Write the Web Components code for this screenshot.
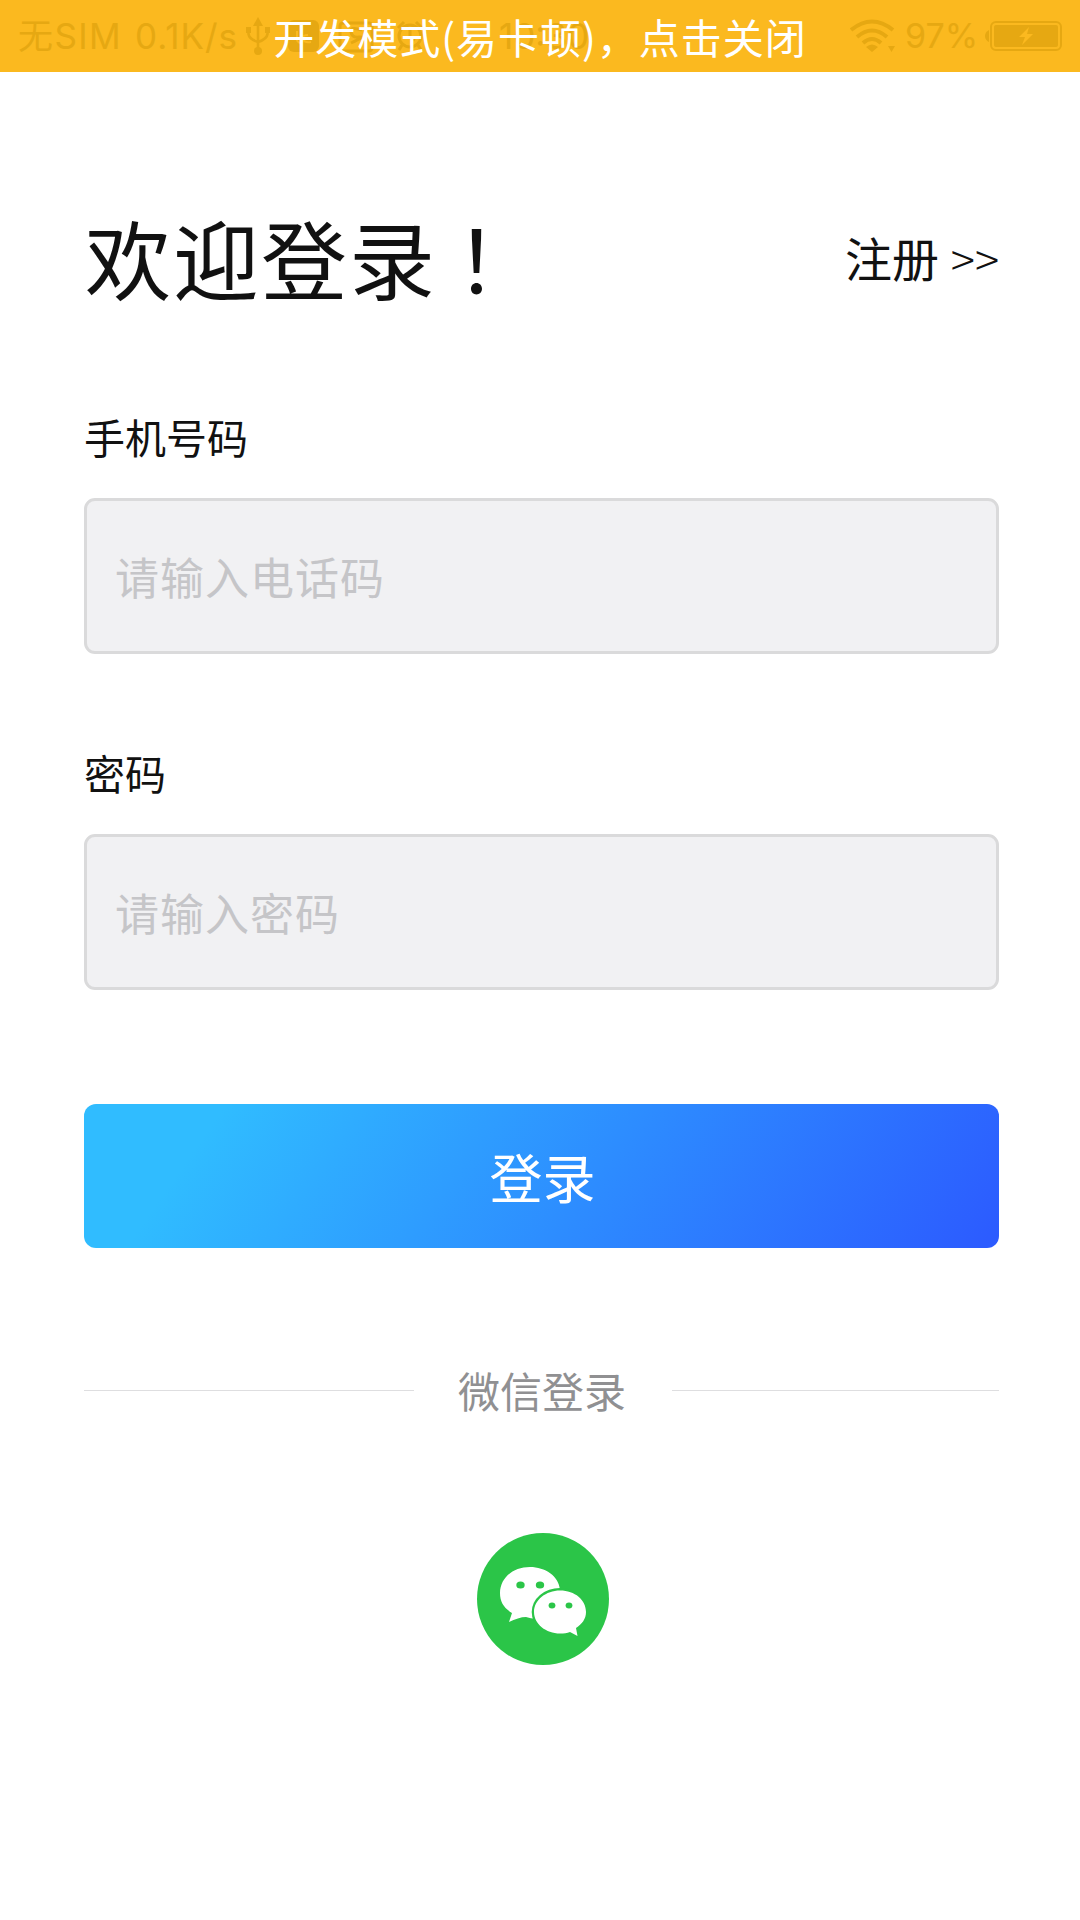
<!DOCTYPE html>
<html lang="zh-CN">
<head>
<meta charset="utf-8">
<title>欢迎登录</title>
<style>
  body {
    margin: 0;
    background: #fff;
    color: #111;
    font-family: "Noto Sans CJK SC", sans-serif;
  }
</style>
</head>
<body>
<login-page></login-page>

<script>
class StatusBar extends HTMLElement {
  constructor() {
    super();
    this.attachShadow({ mode: "open" });
    this.shadowRoot.innerHTML = `
      <style>
        :host {
          display: block;
          position: relative;
          height: 72px;
          background: #fbb91f;
          overflow: hidden;
        }
        .system {
          display: flex;
          align-items: center;
          height: 72px;
          color: #e6a812;
          font-family: Inter, "Noto Sans CJK SC", sans-serif;
          font-size: 35px;
          line-height: 74px;
          white-space: pre;
        }
        .carrier { margin-left: 18px; width: 104px; letter-spacing: 1.4px; }
        .speed { margin-left: 13px; width: 103px; letter-spacing: 1px; }
        .usb { margin-left: 8px; }
        .apps { margin-left: 18px; }
        .time { margin-left: 71px; width: 95px; }
        .wifi { margin-left: 256px; }
        .level { margin-left: 9px; width: 73px; font-size: 34px; }
        .battery { margin-left: 7px; }
        svg { display: block; flex: none; }
        /* developer notice covers the system bar */
        .notice {
          position: absolute;
          inset: 0;
          color: #fff;
          font-size: 41px;
          line-height: 72px;
          text-align: center;
          letter-spacing: 1px;
          white-space: nowrap;
        }
      </style>
      <div class="system">
        <span class="carrier">无SIM</span>
        <span class="speed">0.1K/s</span>
        <svg class="usb" width="24" height="40" viewBox="0 0 24 40" fill="none" stroke="currentColor" stroke-width="2.6">
          <path d="M12 5V35M2.5 14V18Q3 23 12 26Q21 23 21.5 18V13"/>
          <path d="M7 10L12 1L17 10Z" fill="currentColor" stroke="none"/>
          <circle cx="12" cy="35" r="4" fill="currentColor" stroke="none"/>
          <path d="M0 11H5V17H0ZM19 11H24V17H19Z" fill="currentColor" stroke="none"/>
        </svg>
        <svg class="apps" width="140" height="36" viewBox="0 0 140 36">
          <rect x="0" y="2" width="31" height="32" rx="6" fill="currentColor"/>
          <path d="M9 13V22Q10 26 15 24M20 17Q14 17 15 21T23 24" fill="none" stroke="#fbb91f" stroke-width="2"/>
          <rect x="52" y="5" width="32" height="28" rx="3" fill="none" stroke="currentColor" stroke-width="3"/>
          <path d="M74 12Q62 8 63 14T71 19T63 25" fill="none" stroke="currentColor" stroke-width="3"/>
          <circle cx="122" cy="18" r="11" fill="none" stroke="currentColor" stroke-width="3"/>
          <path d="M110 10L116 4M128 4L134 10M122 12V19L127 22M114 27L111 32M130 27L133 32" fill="none" stroke="currentColor" stroke-width="3"/>
        </svg>
        <span class="time">10:30</span>
        <svg class="wifi" width="46" height="36" viewBox="0 0 46 36" fill="none" stroke="currentColor" stroke-width="4">
          <path d="M1 12Q22 -5 43 12M7 19Q22 6 37 19M13 25Q22 17 31 25"/>
          <path d="M16 29Q22 24 28 29L22 34ZM38 28H45L41.5 34Z" fill="currentColor" stroke="none"/>
        </svg>
        <span class="level">97%</span>
        <svg class="battery" width="78" height="32" viewBox="0 0 78 32">
          <path d="M4 10V22Q0 20 0 16T4 10Z" fill="currentColor"/>
          <rect x="6" y="2" width="70" height="28" rx="5" fill="none" stroke="currentColor" stroke-width="2"/>
          <rect x="9" y="5" width="64" height="22" rx="2" fill="currentColor"/>
          <path d="M44 7L34 17H40L37 25L48 14H42Z" fill="#fbb91f"/>
        </svg>
      </div>
      <div class="notice"><slot></slot></div>
    `;
  }
}

class LoginHeader extends HTMLElement {
  constructor() {
    super();
    this.attachShadow({ mode: "open" });
    this.shadowRoot.innerHTML = `
      <style>
        :host {
          display: flex;
          justify-content: space-between;
          height: 130px;
          white-space: nowrap;
        }
        h1 {
          margin: 0;
          font-size: 86px;
          font-weight: 400;
          line-height: 120px;
          letter-spacing: 2px;
        }
        .link {
          font-size: 47px;
          line-height: 119px;
        }
      </style>
      <h1><slot></slot></h1>
      <span class="link"><slot name="link"></slot></span>
    `;
  }
}

class FormField extends HTMLElement {
  constructor() {
    super();
    this.attachShadow({ mode: "open" });
    this.shadowRoot.innerHTML = `
      <style>
        :host {
          display: block;
        }
        .label {
          height: 60px;
          margin-bottom: 29px;
          font-size: 41px;
          line-height: 55px;
        }
        .box {
          box-sizing: border-box;
          height: 156px;
          padding-left: 28px;
          border: 3px solid #dadadb;
          border-radius: 11px;
          background: #f1f1f3;
          color: #c5c5c8;
          font-size: 44px;
          line-height: 151px;
          letter-spacing: 1px;
        }
      </style>
      <div class="label"><slot name="label"></slot></div>
      <div class="box"><slot></slot></div>
    `;
  }
}

class LoginButton extends HTMLElement {
  constructor() {
    super();
    this.attachShadow({ mode: "open" });
    this.shadowRoot.innerHTML = `
      <style>
        :host {
          display: block;
          box-sizing: border-box;
          height: 144px;
          padding-left: 2px;
          border-radius: 12px;
          background: linear-gradient(125deg, #30bcff 14%, #2d8dff 55%, #2c5aff 100%);
          color: #fff;
          font-size: 53px;
          line-height: 144px;
          text-align: center;
        }
      </style>
      <slot></slot>
    `;
  }
}

class TextDivider extends HTMLElement {
  constructor() {
    super();
    this.attachShadow({ mode: "open" });
    this.shadowRoot.innerHTML = `
      <style>
        :host {
          display: flex;
          align-items: center;
          height: 60px;
          color: #909092;
          font-size: 42px;
          line-height: 60px;
        }
        :host::before, :host::after {
          content: "";
          flex: 330;
          height: 1px;
          background: #dedee0;
        }
        :host::after { flex: 327; }
        span {
          padding: 0 46px 0 44px;
        }
      </style>
      <span><slot></slot></span>
    `;
  }
}

class WechatIcon extends HTMLElement {
  constructor() {
    super();
    this.attachShadow({ mode: "open" });
    this.shadowRoot.innerHTML = `
      <style>
        :host {
          display: block;
          width: 132px;
          height: 132px;
        }
        svg { display: block; }
      </style>
      <svg width="132" height="132" viewBox="0 0 132 132">
        <circle cx="66" cy="66" r="66" fill="#2bc548"/>
        <path d="M23 60C23 45 36 34 53 34C68 34 82 43 83 57L70 86C63 86 55 86 49 84C44 84 38 86 32 89L35 80C27 75 23 69 23 60Z" fill="#fff"/>
        <ellipse cx="83" cy="79" rx="28.3" ry="24" fill="#2bc548"/>
        <path d="M109 79C109 67 98 57.5 83 57.5C69 57.5 57 67 57 79C57 91 69 100.5 83 100.5C87 100.5 90 100 93 99L100.5 103L99 95C105 91 109 86 109 79Z" fill="#fff"/>
        <g fill="#2bc548">
          <ellipse cx="43.5" cy="52" rx="4.2" ry="3.5"/>
          <ellipse cx="63" cy="52" rx="4.2" ry="3.5"/>
          <ellipse cx="75" cy="72.5" rx="3.4" ry="3"/>
          <ellipse cx="92" cy="72.5" rx="3.4" ry="3"/>
        </g>
      </svg>
    `;
  }
}

class LoginPage extends HTMLElement {
  constructor() {
    super();
    this.attachShadow({ mode: "open" });
    this.shadowRoot.innerHTML = `
      <style>
        :host {
          display: block;
          height: 1920px;
          background: #fff;
        }
        main {
          display: flex;
          flex-direction: column;
          padding: 125px 81px 0 84px;
        }
        login-header { margin-left: 1px; }
        .mark { margin-left: 18px; }
        .arrows { margin-left: 2px; font-size: 45px; font-weight: 300; }
        .phone { margin-top: 82px; }
        .password { margin-top: 91px; }
        login-button { margin-top: 114px; }
        text-divider { margin-top: 112px; }
        wechat-icon { margin-top: 113px; align-self: center; position: relative; left: 1px; }
      </style>
      <status-bar>开发模式(易卡顿)，点击关闭</status-bar>
      <main>
        <login-header>欢迎登录<span class="mark">！</span><span slot="link">注册<span class="arrows"> &gt;&gt;</span></span></login-header>
        <form-field class="phone"><span slot="label">手机号码</span>请输入电话码</form-field>
        <form-field class="password"><span slot="label">密码</span>请输入密码</form-field>
        <login-button>登录</login-button>
        <text-divider>微信登录</text-divider>
        <wechat-icon></wechat-icon>
      </main>
    `;
  }
}

customElements.define("status-bar", StatusBar);
customElements.define("login-header", LoginHeader);
customElements.define("form-field", FormField);
customElements.define("login-button", LoginButton);
customElements.define("text-divider", TextDivider);
customElements.define("wechat-icon", WechatIcon);
customElements.define("login-page", LoginPage);
</script>
</body>
</html>
